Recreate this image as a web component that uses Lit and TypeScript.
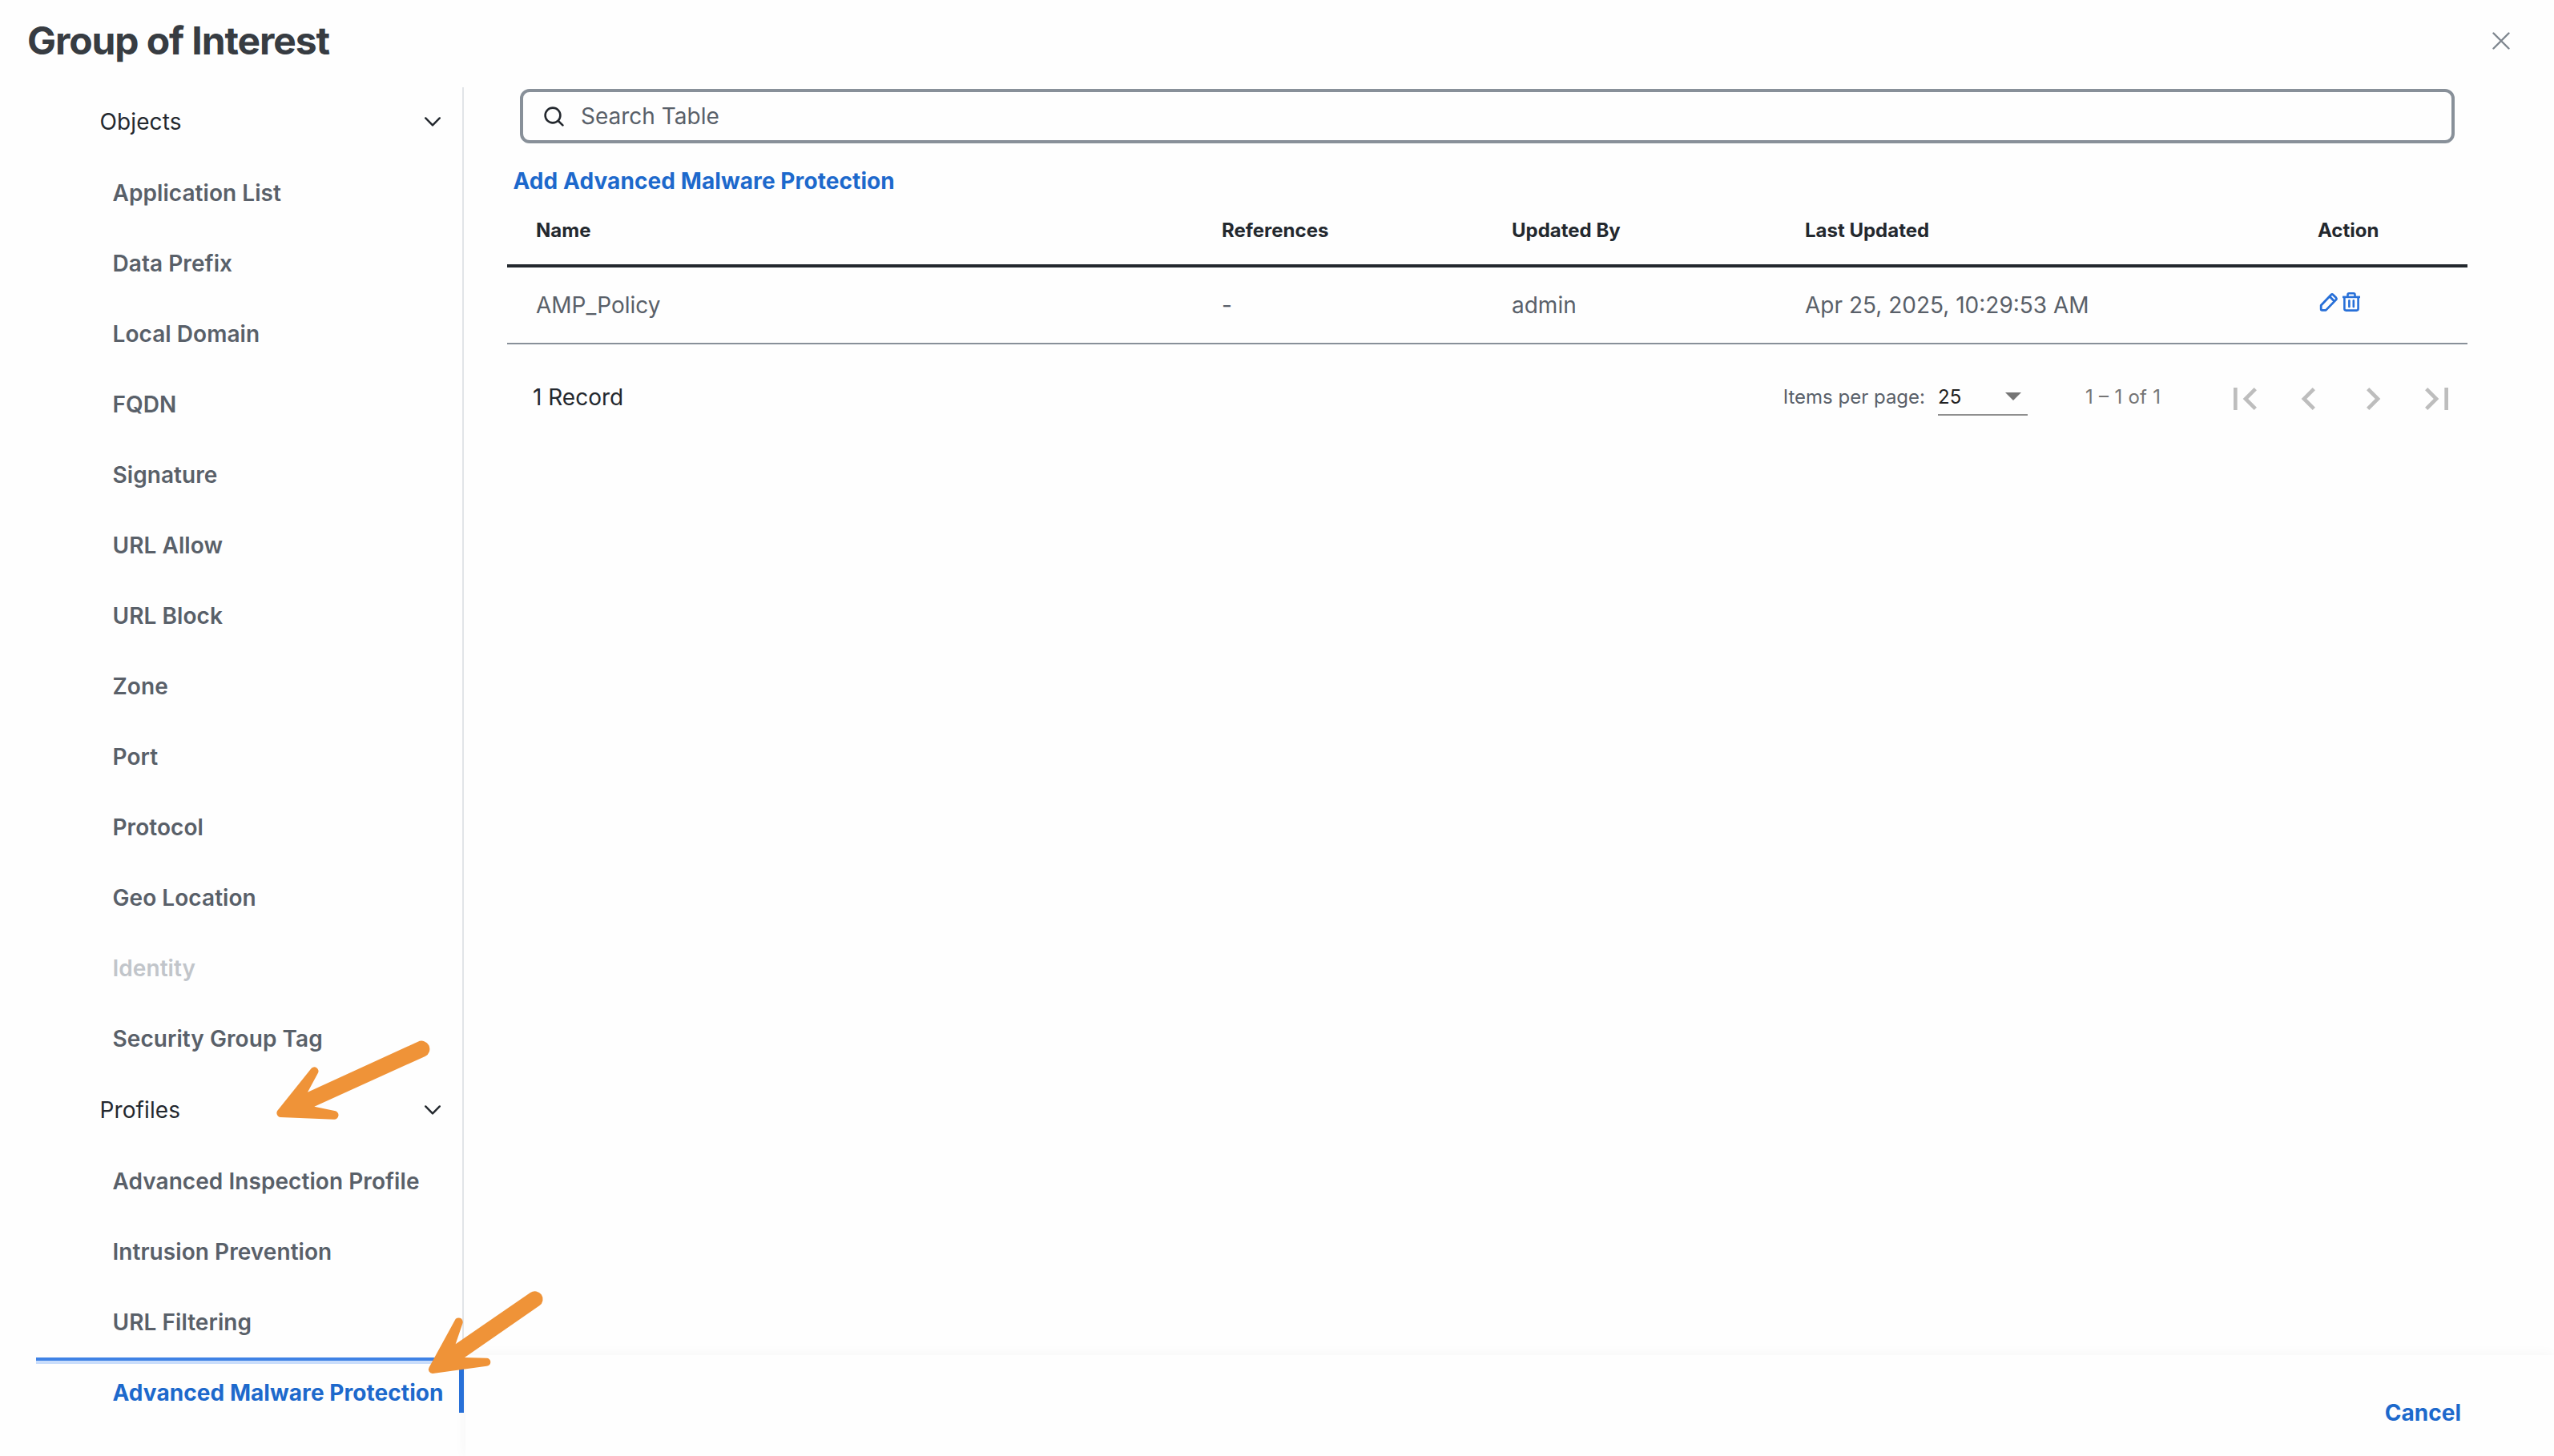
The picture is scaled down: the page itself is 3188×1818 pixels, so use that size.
import { LitElement, html, svg, TemplateResult, css } from 'lit';
import { customElement, state } from 'lit/decorators.js';
import { classMap } from 'lit/directives/class-map.js';

interface NavItem {
    label: string;
    disabled?: boolean;
}

interface NavGroup {
    label: string;
    items: NavItem[];
}

const GROUPS: NavGroup[] = [
    {
        label: 'Objects',
        items: [
            { label: 'Application List' },
            { label: 'Data Prefix' },
            { label: 'Local Domain' },
            { label: 'FQDN' },
            { label: 'Signature' },
            { label: 'URL Allow' },
            { label: 'URL Block' },
            { label: 'Zone' },
            { label: 'Port' },
            { label: 'Protocol' },
            { label: 'Geo Location' },
            { label: 'Identity', disabled: true },
            { label: 'Security Group Tag' }
        ]
    },
    {
        label: 'Profiles',
        items: [
            { label: 'Advanced Inspection Profile' },
            { label: 'Intrusion Prevention' },
            { label: 'URL Filtering' },
            { label: 'Advanced Malware Protection' }
        ]
    }
];

const ROWS = [
    { name: 'AMP_Policy', references: '-', updatedBy: 'admin', lastUpdated: 'Apr 25, 2025, 10:29:53 AM' }
];

const PAGER_ICONS = [
    'M18.41 16.59L13.82 12l4.59-4.59L17 6l-6 6 6 6zM6 6h2v12H6z',
    'M15.41 7.41L14 6l-6 6 6 6 1.41-1.41L10.83 12z',
    'M10 6L8.59 7.41 13.17 12l-4.58 4.59L10 18l6-6z',
    'M5.59 7.41L10.18 12l-4.59 4.59L7 18l6-6-6-6zM16 6h2v12h-2z'
];

@customElement('goi-nav')
export class GoiNav extends LitElement {

    static styles = css`
        :host {
            display: block;
            box-sizing: border-box;
            width: 579px;
            margin-top: -2px;
            padding-left: 45px;
        }

        .group {
            display: flex;
            align-items: center;
            justify-content: space-between;
            height: 90px;
            padding: 0 29px 0 79.5px;
            letter-spacing: 0.1px;
            color: #23282e;
        }

        .group svg {
            width: 20px;
            height: 12px;
        }

        .item {
            display: flex;
            align-items: center;
            box-sizing: border-box;
            height: 88px;
            padding-left: 95.5px;
            font-weight: 600;
            letter-spacing: 0.06px;
            color: #596069;
            white-space: nowrap;
        }

        .item--disabled {
            color: #c1c5ca;
        }

        .item--selected {
            position: relative;
            font-weight: 700;
            color: #1d69cc;
        }

        .focus-line {
            position: absolute;
            left: 0;
            right: 30px;
            top: 0;
            height: 4px;
            background: #3f82e5;
            border-bottom: 4px solid #c9ddfb;
        }

        .marker {
            position: absolute;
            right: 0;
            top: 14px;
            width: 6px;
            height: 55px;
            background: #2870d8;
        }
    `;

    @state() private selected = 'Advanced Malware Protection';

    private renderItem(item: NavItem): TemplateResult {
        const selected = item.label === this.selected;
        const classes = { item: true, 'item--disabled': !!item.disabled, 'item--selected': selected };
        return html`
            <div class=${classMap(classes)}>
                ${item.label}
                ${selected ? html`<span class="focus-line"></span><span class="marker"></span>` : ''}
            </div>`;
    }

    render(): TemplateResult {
        return html`
            ${GROUPS.map(group => html`
                <div class="group">
                    <span>${group.label}</span>
                    <svg viewBox="0 0 20 12" fill="none" stroke="#23282e" stroke-width="2.4" stroke-linecap="round" stroke-linejoin="round">
                        <path d="M1.2 1.4L10 10.4L18.8 1.4" />
                    </svg>
                </div>
                ${group.items.map(item => this.renderItem(item))}
            `)}`;
    }
}

@customElement('goi-table')
export class GoiTable extends LitElement {

    static styles = css`
        :host {
            display: block;
            color: #23282e;
        }

        .search {
            display: flex;
            align-items: center;
            box-sizing: border-box;
            height: 68px;
            margin: 0 16px;
            padding-left: 26px;
            gap: 21px;
            border: 4px solid #889099;
            border-radius: 12px;
            color: #596069;
        }

        .search svg {
            width: 25px;
            height: 25px;
        }

        .add {
            padding: 27px 8px 0 7.5px;
            line-height: 40px;
            font-weight: 700;
            letter-spacing: 0.09px;
            color: #1d69cc;
        }

        .row {
            display: grid;
            grid-template-columns: 856px 362px 366px 640px 1fr;
            align-items: center;
            box-sizing: border-box;
            padding-left: 36px;
            height: 96px;
            border-bottom: 2px solid #889099;
            color: #596069;
        }

        .row--head {
            height: 88px;
            padding-bottom: 2px;
            border-bottom: 4px solid #23282e;
            font-size: 24px;
            font-weight: 700;
            color: #23282e;
        }

        .actions {
            display: flex;
            gap: 4px;
            padding: 0 0 8px 2px;
        }

        .actions svg {
            width: 24px;
            height: 26px;
        }

        .footer {
            display: flex;
            align-items: center;
            height: 132px;
            padding-left: 32px;
        }

        .pager {
            display: flex;
            align-items: center;
            margin-left: auto;
            font-size: 24px;
            color: #596069;
        }

        .label {
            padding-bottom: 1px;
        }

        .select {
            display: flex;
            align-items: center;
            justify-content: space-between;
            box-sizing: border-box;
            width: 112px;
            height: 46px;
            margin: 0 72px 0 16px;
            padding-right: 8px;
            border-bottom: 2px solid #8f8f8f;
            color: #212121;
        }

        .select svg {
            width: 20px;
            height: 10px;
        }

        .range {
            width: 171px;
            padding-bottom: 1px;
            word-spacing: 0.6px;
            color: #757575;
        }

        .pages {
            display: flex;
            gap: 24px;
            padding: 4px 10px 0 0;
        }

        .pages svg {
            width: 56px;
            height: 56px;
            fill: #bdbdbd;
        }
    `;

    render(): TemplateResult {
        return html`
            <div class="search">
                <svg viewBox="0 0 25 25" fill="none" stroke="#23282e" stroke-width="2.6" stroke-linecap="round">
                    <circle cx="11" cy="11" r="9.4" />
                    <path d="M17.6 17.8L23.4 23.4" />
                </svg>
                <span>Search Table</span>
            </div>
            <div class="add">Add Advanced Malware Protection</div>
            <div class="row row--head">
                <span>Name</span>
                <span>References</span>
                <span>Updated By</span>
                <span>Last Updated</span>
                <span>Action</span>
            </div>
            ${ROWS.map(row => html`
                <div class="row">
                    <span>${row.name}</span>
                    <span>${row.references}</span>
                    <span>${row.updatedBy}</span>
                    <span>${row.lastUpdated}</span>
                    <span class="actions">
                        <svg viewBox="0 0 24 26" fill="none" stroke="#2870d8" stroke-width="2.8" stroke-linejoin="round">
                            <path d="M2.2 17.2L14.6 4.2Q16 2.9 17.4 4.2L20.8 7.6Q22.1 9 20.8 10.4L8.2 23.4H3.6Q2.2 23.4 2.2 22Z" />
                            <path d="M12.8 6L18.9 12.2" />
                        </svg>
                        <svg viewBox="0 0 24 26" fill="none" stroke="#2870d8" stroke-width="2.6">
                            <path d="M1 6.9H23" />
                            <path d="M7.5 6.5V4Q7.5 2.3 9.2 2.3H14.8Q16.5 2.3 16.5 4V6.5" />
                            <path d="M3.4 7V21.6Q3.4 23.6 5.4 23.6H18.6Q20.6 23.6 20.6 21.6V7" />
                            <path d="M9.4 11.2V19M14.8 11.2V19" stroke-linecap="round" />
                        </svg>
                    </span>
                </div>
            `)}
            <div class="footer">
                <span>1 Record</span>
                <div class="pager">
                    <span class="label">Items per page:</span>
                    <div class="select">
                        <span>25</span>
                        <svg viewBox="0 0 20 10"><path d="M0 0H20L10 10Z" fill="#757575" /></svg>
                    </div>
                    <span class="range">1 – 1 of 1</span>
                    <div class="pages">
                        ${PAGER_ICONS.map(d => html`<svg viewBox="0 0 24 24">${svg`<path d=${d} />`}</svg>`)}
                    </div>
                </div>
            </div>`;
    }
}

@customElement('app-root')
export class AppRoot extends LitElement {

    static styles = css`
        :host {
            position: relative;
            display: flex;
            flex-direction: column;
            box-sizing: border-box;
            width: 100%;
            height: 100vh;
            overflow: hidden;
            background: #fefefe;
            font-family: Inter, "Liberation Sans", sans-serif;
            font-size: 28px;
        }

        .header {
            display: flex;
            align-items: center;
            justify-content: space-between;
            flex: none;
            box-sizing: border-box;
            height: 109px;
            padding: 0 55px 7px 34px;
        }

        .title {
            margin: 0;
            font-size: 48px;
            line-height: 58px;
            font-weight: 700;
            letter-spacing: -1.1px;
            color: #373c42;
        }

        .close {
            width: 22px;
            height: 22px;
        }

        .body {
            display: flex;
            flex: 1;
            min-height: 0;
        }

        .side {
            flex: none;
            box-sizing: border-box;
            width: 579px;
            height: 1655px;
            border-right: 2px solid #e1e4e8;
        }

        .main {
            display: flex;
            flex-direction: column;
            flex: 1;
            padding: 2px 108px 0 54px;
        }

        .bottom {
            display: flex;
            justify-content: flex-end;
            box-sizing: border-box;
            height: 126px;
            margin: auto -108px 0 -52px;
            padding: 52px 116px 0 0;
            line-height: 40px;
            font-weight: 700;
            color: #1d69cc;
            background: #fefefe;
            box-shadow: 0 0 16px rgba(0, 0, 0, 0.04);
        }

        .arrow {
            position: absolute;
            fill: #ef9338;
        }

        .arrow--profiles {
            left: 340px;
            top: 1298px;
            width: 200px;
            height: 102px;
        }

        .arrow--malware {
            left: 530px;
            top: 1608px;
            width: 152px;
            height: 110px;
        }
    `;

    render(): TemplateResult {
        return html`
            <div class="header">
                <h1 class="title">Group of Interest</h1>
                <svg class="close" viewBox="0 0 22 22" stroke="#7e868f" stroke-width="2.4" stroke-linecap="round">
                    <path d="M1.5 1.5L20.5 20.5M20.5 1.5L1.5 20.5" />
                </svg>
            </div>
            <div class="body">
                <div class="side"><goi-nav></goi-nav></div>
                <div class="main">
                    <goi-table></goi-table>
                    <div class="bottom"><span>Cancel</span></div>
                </div>
            </div>
            <svg class="arrow arrow--profiles" viewBox="60 84 600 306">
                <path d="M79 350L204 194A15 15 0 0 1 230 211L192 281L605 92A30 30 0 0 1 632 147L217 335L293 351A16 16 0 0 1 290 383L90 375A16 16 0 0 1 79 350Z" />
            </svg>
            <svg class="arrow arrow--malware" viewBox="90 24 456 330">
                <path d="M107 322L203 146A15 15 0 0 1 232 158L206 235L486 42A29 29 0 0 1 520 91L240 285L322 287A15 15 0 0 1 322 317L121 345A15 15 0 0 1 107 322Z" />
            </svg>`;
    }
}

declare global {
    interface HTMLElementTagNameMap {
        'goi-nav': GoiNav;
        'goi-table': GoiTable;
        'app-root': AppRoot;
    }
}
